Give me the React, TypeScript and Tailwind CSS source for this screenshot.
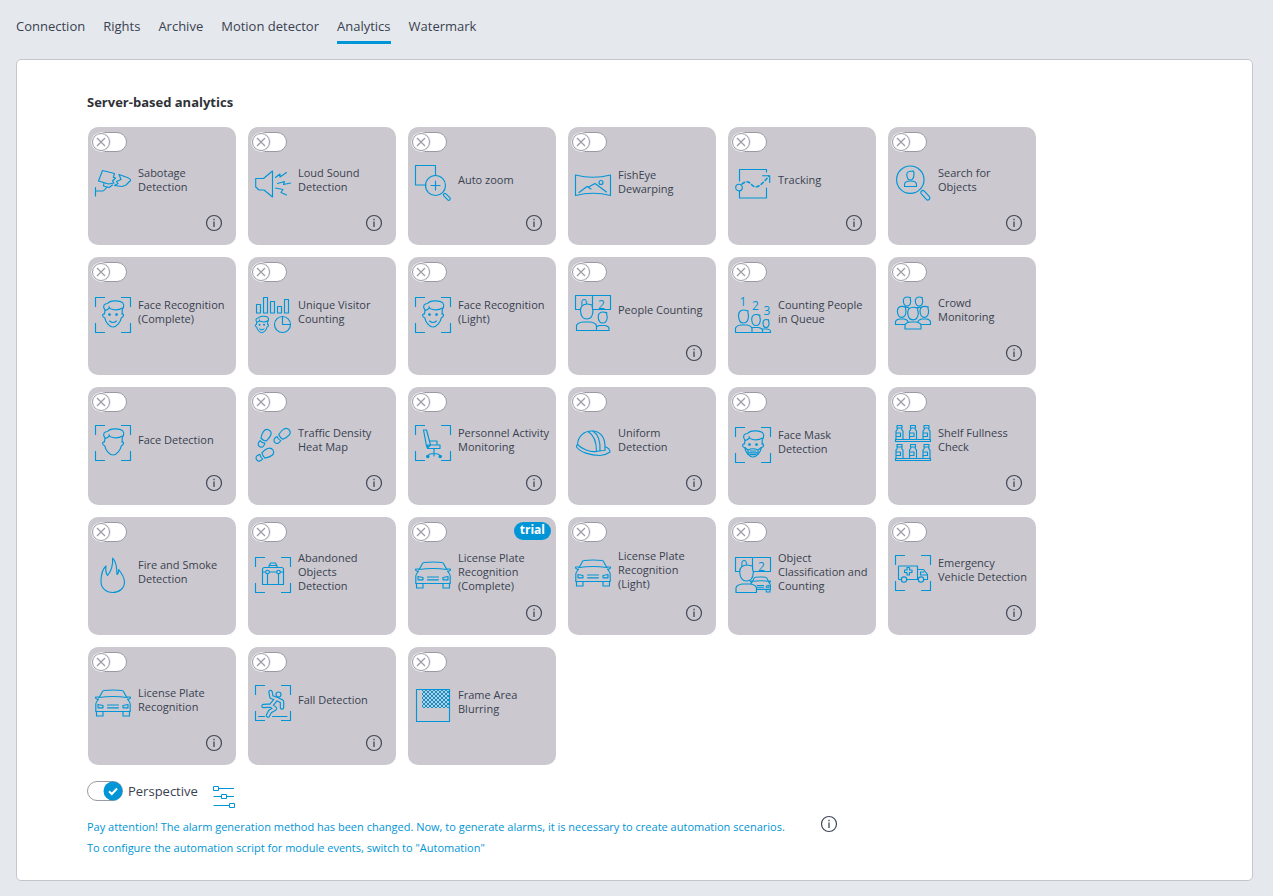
import { useState, type ReactNode } from "react";

const CARD_FILL = "#cbc9cf";

function Icon({ children }: { children: ReactNode }) {
  return (
    <svg
      viewBox="0 0 36 36"
      className="size-9 shrink-0 overflow-visible text-[#0095d6]"
      fill="none"
      stroke="currentColor"
      strokeWidth="1.150"
      strokeLinejoin="round"
      strokeLinecap="round"
      aria-hidden="true"
    >
      {children}
    </svg>
  );
}

const Brackets = () => (
  <path d="M.5 10V.5H10M26 .5h9.500V10M35.500 26v9.500H26M10 35.500H.5V26" strokeLinecap="butt" />
);

/* Head with hair; the features are added by the caller. */
const Head = () => (
  <>
    <path d="M10 13C7.500 10 8.500 6.500 12.500 6.500C15 3.500 24 3 27.500 5.500C29.500 8 28.500 11 27.200 13V17" />
    <path d="M10 13L9.500 17C7 16.500 7 20 9.800 20.800C10.500 25 14 30 18 30C22 30 25.500 25 26.300 20.800C29 20 29.200 16.500 27 16.800M14 9.500Q14.500 12 17 12.300C21 13.500 25 12.500 27.500 11M10.500 13.500Q13.500 12.500 14.500 10.500" />
  </>
);

const Smile = () => (
  <>
    <circle cx="14.500" cy="17.500" r=".8" fill="currentColor" />
    <circle cx="21.500" cy="17.500" r=".8" fill="currentColor" />
    <path d="M14.500 24Q18 27 21.500 24" />
  </>
);

type PersonShape = Record<"x" | "y" | "rx" | "ry", number> & {
  body?: Record<"left" | "right" | "top" | "base", number>;
};

function Person({ x, y, rx, ry, body }: PersonShape) {
  const px = (f: number) => x + rx * f;
  const py = (f: number) => y + ry * f;
  return (
    <g fill={CARD_FILL}>
      {body && (
        <path
          d={`M${body.left} ${body.base}V${(body.top + body.base) / 2}Q${body.left} ${body.top + 1} ${body.left + (body.right - body.left) * 0.3} ${body.top}H${body.right - (body.right - body.left) * 0.3}Q${body.right} ${body.top + 1} ${body.right} ${(body.top + body.base) / 2}V${body.base}Z`}
        />
      )}
      <path
        d={`M${px(-1)} ${py(-0.1)}C${px(-1)} ${py(-0.8)} ${px(-0.5)} ${py(-1)} ${px(0.1)} ${py(-1)}C${px(0.5)} ${py(-1)} ${px(0.6)} ${py(-0.85)} ${px(0.9)} ${py(-0.9)}C${px(0.8)} ${py(-0.5)} ${px(1)} ${py(-0.4)} ${px(1)} ${py(0)}C${px(0.95)} ${py(0.6)} ${px(0.6)} ${py(1)} ${px(0)} ${py(1)}C${px(-0.6)} ${py(1)} ${px(-0.95)} ${py(0.6)} ${px(-1)} ${py(-0.1)}Z`}
      />
    </g>
  );
}

function Digit({ x, y, children }: { x: number; y: number; children: string }) {
  return (
    <text x={x} y={y} textAnchor="middle" fontSize="12" fill="currentColor" stroke="none" className="font-['Open_Sans',sans-serif]">
      {children}
    </text>
  );
}

const Car = () => (
  <>
    <path d="M4.500 12L7.500 6.500Q8 5.500 9 5.500Q18 4.500 27 5.500Q28 5.500 28.500 6.500L31.500 12" />
    <path d="M4 12H1Q0 12 1 13.500L3 14.500M32 12h3Q36 12 35 13.500L33 14.500M4 12.500Q18 10.500 32 12.500" />
    <path d="M3.500 14L1.500 17Q.8 18 .8 20V26.500H35.200V20Q35.200 18 34.500 17L32.500 14" />
    <path d="M1.500 26.500V31H8V26.500M28 26.500V31H34.500V26.500" />
    <path d="M3 19.500L8 20.500V22.800H3ZM33 19.500L28 20.500V22.800H33ZM12.500 20H23.500M12.500 22.800H23.500" />
  </>
);

const Bottles = ({ y }: { y: number }) => (
  <>
    {[0.5, 14, 27.5].map((x) => (
      <path
        key={x}
        d={`M${x + 1.5} ${y}h5v2.500h-5zM${x + 2} ${y + 2.5}Q${x + 2} ${y + 4.5} ${x + 0.5} ${y + 5.5}V${y + 14}h7V${y + 5.5}Q${x + 6} ${y + 4.5} ${x + 6} ${y + 2.5}M${x + 0.5} ${y + 7.5}h4.500v3.500h-4.500`}
      />
    ))}
    <path d={`M.5 ${y + 14}h35v2h-35z`} />
  </>
);

const Footprint = ({ x, y, angle }: { x: number; y: number; angle: number }) => (
  <g transform={`translate(${x} ${y}) rotate(${angle})`}>
    <path d="M-3 3C-4.500 -1 -5 -8 0 -8S5 -3 3 3Q0 4 -3 3Z" />
    <path d="M-2.800 5.500Q0 6.500 2.800 5.500C3.500 8.500 3 11 0 11S-3.500 8.500 -2.800 5.500Z" />
  </g>
);

const fallLimbs = "M15.500 7L16.500 12L22 14L27 16.500V22.500M20.500 15L16 20.500L8.500 21M16 20.500L20 23.500L15 26.500L13 30.500";

const icons: Record<string, ReactNode> = {
  sabotage: (
    <>
      <path d="M7.500 5.500L19.500 8.500L18.300 12.300L20.500 13L17.500 16L19 18L13.500 19L3.500 16Z" />
      <path d="M24 9.500L31 12Q36 13.500 35.500 15.500L31 20L27 21.500L19.500 20.500L23 18.500L21.500 16.500L26 14.500Z" />
      <path d="M.5 22.500V31M.5 26H7.500Q9 26 11.500 22.500M9 18L8.500 21L14 22.500L17.500 20" />
    </>
  ),
  sound: (
    <>
      <path d="M.7 13.500H8.500L17.500 6V32L9 25H4L.7 22Z" />
      <path d="M20.500 12.500L25 9V12L31.500 7.500M22.500 18.500L29.500 16.500L28.500 19.500L35.500 18M20.500 23L28 24.500L26 27.500L31.500 30" />
    </>
  ),
  zoom: (
    <>
      <path d="M11 20H.5V.5H20.500V10" />
      <circle cx="20.500" cy="20.500" r="10" />
      <path d="M20.500 16V25M16 20.500H25" />
      <rect x="-1.500" y="0" width="3" height="8.500" rx="1.500" transform="translate(28.800 28.800) rotate(-45)" />
    </>
  ),
  fisheye: (
    <>
      <path d="M.5 8Q18 12.500 35.500 8V28.500Q18 24 .5 28.500Z" />
      <path d="M4 25.500L12 19.500L16 22M13.500 20L20 16.500L31.500 25" />
      <circle cx="26" cy="15.500" r="2" />
    </>
  ),
  tracking: (
    <>
      <path d="M4.500 16V4.500H31.500V7M4.500 26V33H31.500V23" />
      <circle cx="4" cy="22.500" r="3.300" />
      <path d="M7 19C12 15 14 17 17 20C22 25 27 19 34 11" strokeDasharray="3 2.500" strokeWidth="1.500" />
      <path d="M27.500 10.700H34.700V17.500" />
    </>
  ),
  search: (
    <>
      <circle cx="15.300" cy="14.700" r="13.700" />
      <path d="M9.500 21.500V19.500C9.500 16.500 12.500 16 15.500 16S21.500 16.500 21.500 19.500V21.500Z" />
      <path d="M11.800 10C11.500 7 13.500 6 18.500 6C19.500 9 19 15 15.500 15C13 15 12 12.500 11.800 10Z" fill={CARD_FILL} />
      <rect x="-2" y="0" width="4" height="11.500" rx="2" transform="translate(26.500 26) rotate(-42)" />
    </>
  ),
  face: (
    <>
      <Brackets />
      <Head />
      <Smile />
    </>
  ),
  faceBlank: (
    <>
      <Brackets />
      <Head />
    </>
  ),
  mask: (
    <>
      <Brackets />
      <Head />
      <circle cx="14.500" cy="17.500" r=".8" fill="currentColor" />
      <circle cx="21.500" cy="17.500" r=".8" fill="currentColor" />
      <path d="M9.800 20.500L13 23Q18 20.500 23 23L26.300 20.500M13 23V27.500M23 23V27.500M15 24H21M14 25.800H22M15 27.600H21" />
    </>
  ),
  visitors: (
    <>
      <path d="M1.500 7.500h4V16h-4zM8.500.5h4V16h-4zM15.500 4.500h4V16h-4zM22.500 9.500h4V16h-4zM29.500 2.500h4V16h-4z" />
      <g transform="translate(-4.500 16.800) scale(.63)" strokeWidth="1.600">
        <Head />
        <Smile />
      </g>
      <circle cx="27.500" cy="27.500" r="8" />
      <path d="M27.500 19.500V27.500H35.500" />
    </>
  ),
  people: (
    <>
      <path d="M.5.5H35.500V14.500H.5ZM17.500.5V14.500" />
      <Digit x={9} y={12.5}>0</Digit>
      <Digit x={26.5} y={13.5}>2</Digit>
      <Person x={27.7} y={22.5} rx={4.5} ry={5.5} body={{ left: 20.5, right: 34, top: 30.5, base: 35.5 }} />
      <Person x={11.7} y={16.5} rx={6.2} ry={7.5} body={{ left: 1.5, right: 21.5, top: 27, base: 35.5 }} />
    </>
  ),
  queue: (
    <>
      <Digit x={8} y={8.5}>1</Digit>
      <Digit x={20.5} y={13}>2</Digit>
      <Digit x={32} y={18}>3</Digit>
      <Person x={31} y={26.5} rx={3} ry={4} body={{ left: 25, right: 35.5, top: 32, base: 35.5 }} />
      <Person x={21} y={23} rx={4.3} ry={5.5} body={{ left: 14, right: 27.5, top: 30.5, base: 35.5 }} />
      <Person x={8.5} y={19.5} rx={5} ry={6.5} body={{ left: 0.5, right: 17, top: 28, base: 35.5 }} />
    </>
  ),
  crowd: (
    <>
      <Person x={12} y={6.5} rx={3.7} ry={4.5} />
      <Person x={24} y={6.5} rx={3.7} ry={4.5} />
      <path d="M9 12.500Q12 11.500 14.500 13.500M27 12.500Q24 11.500 21.500 13.500" />
      <Person x={6.7} y={16.8} rx={4.3} ry={5.5} body={{ left: 0.5, right: 13, top: 24, base: 29.5 }} />
      <Person x={29.3} y={16.8} rx={4.3} ry={5.5} body={{ left: 23, right: 35.5, top: 24, base: 29.5 }} />
      <Person x={18} y={18.5} rx={5.3} ry={6.3} body={{ left: 10, right: 26, top: 27, base: 34 }} />
    </>
  ),
  footprints: (
    <>
      <Footprint x={10} y={12} angle={28} />
      <Footprint x={28} y={10} angle={48} />
      <Footprint x={11} y={29} angle={60} />
    </>
  ),
  chair: (
    <>
      <Brackets />
      <path d="M8.500 5H11.500L15.500 20L12.500 23L11.500 21ZM14.500 16H22V17.500M22 16V20M12.500 23.500V20H25V23.500Z" />
      <path d="M19 23.500V31M13 31Q13.500 28.500 19 28.500T25 31" />
      <circle cx="12.800" cy="31.500" r="1.200" fill="currentColor" />
      <circle cx="25.200" cy="31.500" r="1.200" fill="currentColor" />
    </>
  ),
  helmet: (
    <>
      <path d="M2.500 19.500C3 11 9 6 17 6C25 6 30 12 30 21.500Q35 23.500 35 27Q31 30 25 30.500C15 30.500 5 27 1.500 22Q1 20.500 2.500 19.500C7 24 15 27.500 21 26.500Q25 25.500 30 25.500V21.500" />
      <path d="M13 6.500C19 10 21.500 17 21.500 26.500M18 6C24 10 25.500 17 25 25.800" />
    </>
  ),
  shelf: (
    <>
      <Bottles y={0.5} />
      <Bottles y={19.5} />
    </>
  ),
  fire: (
    <path d="M17.700 1C22 6 22 12 22 17.500C23.500 16.500 23.700 14.500 23.700 12.500C27.500 17.500 29.500 21 29.500 25C29.500 31 24.500 35.500 17.700 35.500S6 31 6 24.500C6 18.500 6.500 13 11 9C10.500 12.500 10.500 15.500 12.500 18.500C15.500 15 18 8 17.700 1Z" />
  ),
  luggage: (
    <>
      <Brackets />
      <path d="M7.500 12.500Q7.500 10.500 9.500 10.500H26.500Q28.500 10.500 28.500 12.500V27.500H7.500ZM14 10.500V8.500H22V10.500M14.500 8.500L15.500 6H20.500L21.500 8.500M7.500 15H10.500M14.500 15H21.500M25.500 15H28.500M12.500 17V27.500M23.500 17V27.500" />
      <circle cx="12.500" cy="15" r="1.800" />
      <circle cx="23.500" cy="15" r="1.800" />
    </>
  ),
  car: <Car />,
  objects: (
    <>
      <path d="M.5.5H35.500V14.500H.5ZM17.500.5V14.500" />
      <Digit x={9} y={11.5}>0</Digit>
      <Digit x={26.5} y={13.5}>2</Digit>
      <g transform="translate(15 17) scale(.58)" strokeWidth="1.800">
        <Car />
      </g>
      <Person x={11.5} y={16} rx={6.8} ry={8} body={{ left: 1, right: 21.5, top: 27, base: 35.5 }} />
    </>
  ),
  ambulance: (
    <>
      <Brackets />
      <path d="M6 24.500H4Q3.500 24.500 3.500 24V11.500Q3.500 11 4 11H22.500V24.500H12M22.500 14.500H28.500L32.500 19.500V24.500H29M25.500 17V20H31.500M25.500 17H29" />
      <path d="M12 12.500h2.500v2.500H17v2.500h-2.500V20H12v-2.500H9.500V15H12z" />
      <circle cx="9" cy="24.500" r="2.700" />
      <circle cx="26" cy="24.500" r="2.700" fill={CARD_FILL} />
    </>
  ),
  fall: (
    <>
      <Brackets />
      <circle cx="23.500" cy="9.500" r="2.500" />
      <path d={fallLimbs} strokeWidth="4.500" />
      <path d={fallLimbs} stroke={CARD_FILL} strokeWidth="2.200" />
      <path d="M3.500 31.500H9.500M17.500 31.500H32" />
    </>
  ),
  blur: (
    <>
      <defs>
        <pattern id="checker" width="4" height="4" patternUnits="userSpaceOnUse">
          <path d="M0 0h2v2H0zM2 2h2v2H2z" fill="#0095d6" stroke="none" />
        </pattern>
      </defs>
      <rect x="7" y="3" width="27" height="18" fill="url(#checker)" stroke="none" />
      <path d="M1.500 2.500H34.500V34.500H1.500Z" />
    </>
  ),
};

type Module = { name: string; icon: string; info?: boolean; trial?: boolean };

const modules: Module[] = [
  { name: "Sabotage\nDetection", icon: "sabotage", info: true },
  { name: "Loud Sound\nDetection", icon: "sound", info: true },
  { name: "Auto zoom", icon: "zoom", info: true },
  { name: "FishEye\nDewarping", icon: "fisheye" },
  { name: "Tracking", icon: "tracking", info: true },
  { name: "Search for\nObjects", icon: "search", info: true },
  { name: "Face Recognition\n(Complete)", icon: "face" },
  { name: "Unique Visitor\nCounting", icon: "visitors" },
  { name: "Face Recognition\n(Light)", icon: "face" },
  { name: "People Counting", icon: "people", info: true },
  { name: "Counting People\nin Queue", icon: "queue" },
  { name: "Crowd\nMonitoring", icon: "crowd", info: true },
  { name: "Face Detection", icon: "faceBlank", info: true },
  { name: "Traffic Density\nHeat Map", icon: "footprints", info: true },
  { name: "Personnel Activity\nMonitoring", icon: "chair", info: true },
  { name: "Uniform\nDetection", icon: "helmet", info: true },
  { name: "Face Mask\nDetection", icon: "mask" },
  { name: "Shelf Fullness\nCheck", icon: "shelf", info: true },
  { name: "Fire and Smoke\nDetection", icon: "fire" },
  { name: "Abandoned\nObjects\nDetection", icon: "luggage" },
  { name: "License Plate\nRecognition\n(Complete)", icon: "car", info: true, trial: true },
  { name: "License Plate\nRecognition\n(Light)", icon: "car", info: true },
  { name: "Object\nClassification and\nCounting", icon: "objects" },
  { name: "Emergency\nVehicle Detection", icon: "ambulance", info: true },
  { name: "License Plate\nRecognition", icon: "car", info: true },
  { name: "Fall Detection", icon: "fall", info: true },
  { name: "Frame Area\nBlurring", icon: "blur" },
];

const tabs = ["Connection", "Rights", "Archive", "Motion detector", "Analytics", "Watermark"];

function Toggle({ id, initial = false }: { id: string; initial?: boolean }) {
  const [on, setOn] = useState(initial);
  return (
    <span className="relative block h-5 w-9 shrink-0">
      <input
        id={id}
        type="checkbox"
        checked={on}
        onChange={() => setOn(!on)}
        className="block h-5 w-9 cursor-pointer appearance-none rounded-full border border-[#9a9aa5] bg-white"
      />
      <svg
        viewBox="0 0 20 20"
        className={on ? "pointer-events-none absolute top-0 right-0 size-5" : "pointer-events-none absolute top-0 left-0 size-5"}
        aria-hidden="true"
      >
        {on ? (
          <>
            <circle cx="10" cy="10" r="9.500" fill="#0095d6" />
            <path d="M6 10.300L8.800 13L14 7.500" fill="none" stroke="#fff" strokeWidth="2" />
          </>
        ) : (
          <>
            <circle cx="10" cy="10" r="9.500" fill="#fff" stroke="#eeeef1" />
            <circle cx="10" cy="10" r="8.500" fill="#fff" stroke="#9a9aa5" />
            <path d="M6 6L14 14M14 6L6 14" stroke="#9a9aa5" strokeWidth="1.200" />
          </>
        )}
      </svg>
    </span>
  );
}

function InfoButton({ label }: { label: string }) {
  return (
    <button type="button" aria-label={label} className="block size-4 cursor-pointer text-[#3f4656]">
      <svg viewBox="0 0 16 16" className="size-4 overflow-visible" fill="none" stroke="currentColor" aria-hidden="true">
        <circle cx="8" cy="8" r="7.500" strokeWidth="1.200" />
        <path d="M8 6.500V12" strokeWidth="1.300" />
        <path d="M8 3.800V5.200" strokeWidth="1.300" />
      </svg>
    </button>
  );
}

function ModuleCard({ module }: { module: Module }) {
  const id = module.name.replace(/\W+/g, "-").toLowerCase();
  return (
    <li className="relative flex h-[118px] flex-col rounded-[10px] bg-[#cbc9cf] pt-[5px]">
      <div className="h-[21px] pl-[3px]">
        <Toggle id={id} />
      </div>
      {module.trial && (
        <span className="absolute top-[5px] right-[5px] flex h-[18px] items-center rounded-full bg-[#0095d6] px-[6px] pb-[2px] text-[12px] font-bold text-white">
          trial
        </span>
      )}
      <div className={module.trial ? "flex grow items-center gap-[7px] pt-1 pl-[7px]" : "flex grow items-center gap-[7px] pl-[7px]"}>
        <Icon>{icons[module.icon]}</Icon>
        <label htmlFor={id} className="cursor-pointer pb-[6px] text-[11px] leading-[14px] whitespace-pre">
          {module.name}
        </label>
      </div>
      {module.info ? (
        <div className="flex h-8 justify-end pt-[2px] pr-[14px]">
          <InfoButton label={`About ${module.name}`} />
        </div>
      ) : (
        <div className="h-7" />
      )}
    </li>
  );
}

export default function App() {
  return (
    <div className="min-h-screen bg-[#e5e8ed] pr-5 pb-[15px] pl-4 font-['Open_Sans','Noto_Sans',sans-serif] text-[#3a4150]">
      <nav className="flex gap-[18px] pt-4 text-[13px] leading-5">
        {tabs.map((tab) => (
          <a
            key={tab}
            href={`#${tab.toLowerCase().replace(" ", "-")}`}
            aria-current={tab === "Analytics" ? "page" : undefined}
            className={
              tab === "Analytics"
                ? "border-b-[3px] border-[#0095d6] pb-[5px]"
                : "border-b-[3px] border-transparent pb-[5px]"
            }
          >
            {tab}
          </a>
        ))}
      </nav>
      <main className="mt-[15px] rounded-[5px] border border-[#c5c5cd] bg-white px-[70px] pt-8 pb-[22px]">
        <h1 className="text-[13px] leading-5 font-bold text-[#2f3237]">Server-based analytics</h1>
        <ul className="mt-[15px] ml-px grid grid-cols-[repeat(auto-fill,148px)] gap-3">
          {modules.map((module) => (
            <ModuleCard key={module.name} module={module} />
          ))}
        </ul>
        <div className="mt-4 flex items-start">
          <Toggle id="perspective" initial />
          <label htmlFor="perspective" className="ml-[5px] text-[13px] leading-5">
            Perspective
          </label>
          <button type="button" aria-label="Perspective settings" className="mt-1 ml-[14px] text-[#0095d6]">
            <svg viewBox="0 0 24 24" className="size-6" fill="none" stroke="currentColor" aria-hidden="true">
              <path d="M1.500 1.500h5v4h-5zM6.500 3.500H22M1.500 11.500H9M9.500 9.500h5v4h-5zM14.500 11.500H22M1.500 20.500H17M17.500 18.500h5v4h-5z" />
            </svg>
          </button>
        </div>
        <div className="mt-[7px] flex items-start gap-9">
          <p className="text-[11px] leading-[21px] text-[#0095d6]">
            Pay attention! The alarm generation method has been changed. Now, to generate alarms, it is necessary to create automation scenarios.
            <br />
            To configure the automation script for module events, switch to "Automation"
          </p>
          <InfoButton label="About alarm generation" />
        </div>
      </main>
    </div>
  );
}
